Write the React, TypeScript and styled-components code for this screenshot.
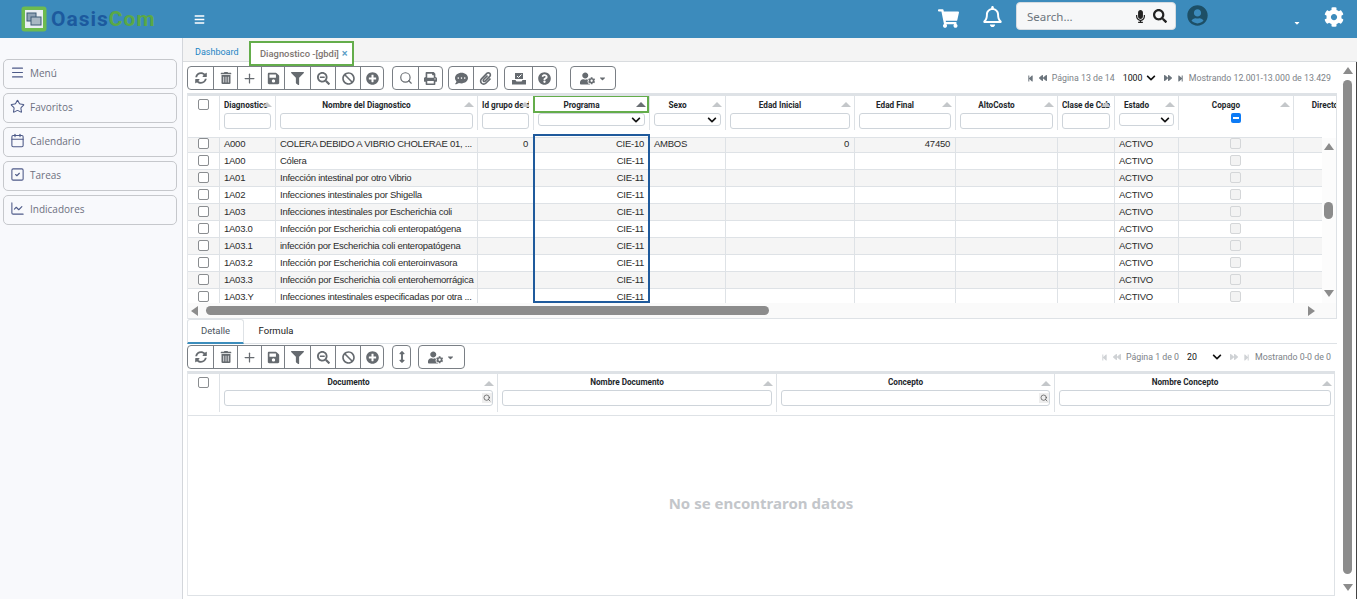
import React from "react";
import styled, { createGlobalStyle } from "styled-components";
import {
  FaSyncAlt, FaTrashAlt, FaSave, FaFilter, FaSearchMinus, FaBan, FaPlusCircle, FaPrint,
  FaCommentDots, FaPaperclip, FaQuestionCircle, FaUserCog, FaShoppingCart, FaRegBell,
  FaMicrophone, FaSearch, FaUserCircle, FaCog, FaBars, FaChevronDown, FaStepBackward,
  FaBackward, FaForward, FaStepForward, FaArrowsAltV, FaCaretDown,
} from "react-icons/fa";
import { Menu, Star, Calendar, SquareCheck, ChartLine, Plus, Search } from "lucide-react";

const GlobalStyle = createGlobalStyle`
  html, body { margin: 0; padding: 0; height: 100%; overflow: hidden; background: #fff; }
  * { box-sizing: border-box; }
`;

const MAIN_COLS = "32px 56px 202px 56px 116px 76px 129px 101px 102px 57px 64px 115px 86px";
const DETAIL_COLS = "32px 278px 279px 278px 281px";

const Shell = styled.div`
  width: 1357px;
  height: 599px;
  display: flex;
  flex-direction: column;
  overflow: hidden;
  font-family: "Liberation Sans", Arial, sans-serif;
`;

const TopBar = styled.header`
  height: 38px;
  flex: none;
  display: flex;
  align-items: center;
  background: #3c8bbc;
  color: #fff;
`;

const Logo = styled.div`
  display: flex;
  align-items: center;
  gap: 4px;
  margin-left: 21px;
  width: 173px;
`;

const LogoText = styled.span`
  font-family: Roboto, sans-serif;
  font-weight: 700;
  font-size: 21px;
  letter-spacing: 1px;
  color: #1c5a9e;
  b { color: #5aa846; font-weight: 700; }
`;

const HeaderIcon = styled.span<{ $left: number; $top?: number }>`
  display: inline-flex;
  margin-left: ${(p) => p.$left}px;
  margin-top: ${(p) => p.$top ?? 0}px;
`;

const SearchBox = styled.div`
  width: 160px;
  height: 28px;
  margin: 0 0 6px 13px;
  padding: 0 8px 0 10px;
  display: flex;
  align-items: center;
  background: #f6f7f8;
  border-radius: 4px;
  border: 1px solid #d5dbe0;
  color: #6c757d;
  font-family: "Noto Sans", sans-serif;
  font-size: 11.5px;
  span { flex: 1; }
  svg { color: #222; }
`;

const Body = styled.div`
  flex: 1;
  display: flex;
  min-height: 0;
`;

const Sidebar = styled.aside`
  width: 183px;
  flex: none;
  padding: 21px 5px 0 3px;
  display: flex;
  flex-direction: column;
  gap: 4px;
  background: #f8f9fc;
  border-right: 1px solid #d3d6db;
`;

const NavItem = styled.div`
  height: 30px;
  display: flex;
  align-items: center;
  gap: 5px;
  padding: 0 0 3px 6px;
  border: 1px solid #c6c8cc;
  border-radius: 5px;
  color: #6d7080;
  font-family: "Open Sans", sans-serif;
  font-size: 10px;
  svg { color: #4d5a88; flex: none; }
`;

const Main = styled.main`
  flex: 1;
  min-width: 0;
  display: flex;
  flex-direction: column;
  position: relative;
`;

const TabStrip = styled.nav`
  height: 24px;
  flex: none;
  display: flex;
  align-items: flex-start;
  padding-left: 12px;
  background: #f4f4f4;
  border-bottom: 1px solid #d9dcdf;
  font-family: Roboto, sans-serif;
  font-size: 9px;
`;

const DashTab = styled.span`
  margin-top: 9px;
  color: #1d84c4;
  width: 54px;
`;

const ActiveTab = styled.span`
  width: 105px;
  height: 25px;
  margin-top: 3px;
  display: flex;
  align-items: center;
  gap: 3px;
  padding: 0 0 0 9px;
  white-space: nowrap;
  background: #fff;
  border: 2px solid #64ad4b;
  color: #7d7470;
  font-weight: 500;
  font-size: 9.4px;
  position: relative;
  z-index: 2;
  i { color: #5a9cc4; font-style: normal; font-size: 11px; }
`;

const Content = styled.div`
  flex: 1;
  min-height: 0;
  padding: 4px 20px 0 4px;
  display: flex;
  flex-direction: column;
  background: #fff;
`;

const ToolRow = styled.div<{ $mt?: number }>`
  height: 24px;
  flex: none;
  display: flex;
  align-items: center;
  margin-top: ${(p) => p.$mt ?? 0}px;
  padding-right: 6px;
`;

const ToolGroup = styled.div<{ $ml?: number }>`
  display: flex;
  height: 24px;
  margin-left: ${(p) => p.$ml ?? 0}px;
  border: 1px solid #7a7f85;
  border-radius: 4px;
  overflow: hidden;
`;

const ToolButton = styled.span<{ $w?: number }>`
  width: ${(p) => p.$w ?? 25}px;
  display: flex;
  align-items: center;
  justify-content: center;
  gap: 3px;
  color: #666b70;
  & + & { border-left: 1px solid #7a7f85; }
`;

const Pager = styled.div<{ $dim?: boolean }>`
  margin-left: auto;
  display: flex;
  align-items: center;
  gap: 5px;
  font-family: Roboto, sans-serif;
  font-size: 8.8px;
  color: #7c8287;
  svg { color: ${(p) => (p.$dim ? "#cfd2d5" : "#6c757d")}; }
`;

const PageSize = styled.span<{ $w: number }>`
  width: ${(p) => p.$w}px;
  display: flex;
  align-items: center;
  justify-content: space-between;
  color: #111;
  margin: 0 3px;
  svg { color: #111; }
`;

const GridFrame = styled.section<{ $mt: number; $w: number }>`
  position: relative;
  flex: none;
  margin-top: ${(p) => p.$mt}px;
  width: ${(p) => p.$w}px;
  border-top: 3px solid #dee2e6;
  border-left: 1px solid #e6e8eb;
  border-right: 1px solid #dee2e6;
  overflow: hidden;
`;

const HeadRow = styled.div<{ $cols: string; $pb: number }>`
  display: grid;
  grid-template-columns: ${(p) => p.$cols};
  padding-bottom: ${(p) => p.$pb}px;
`;

const HeadCell = styled.div<{ $h: number; $pt?: number }>`
  position: relative;
  height: ${(p) => p.$h}px;
  padding: ${(p) => p.$pt ?? 0}px 4px 0;
  border-right: 1px solid #dee2e6;
  overflow: hidden;
`;

const HeadLabel = styled.div<{ $h?: number; $lh?: number; $tight?: boolean }>`
  height: ${(p) => p.$h ?? 17}px;
  line-height: ${(p) => p.$lh ?? 18}px;
  padding-right: ${(p) => (p.$tight ? 0 : 20)}px;
  text-align: ${(p) => (p.$tight ? "left" : "center")};
  white-space: nowrap;
  overflow: hidden;
  font-family: Roboto, sans-serif;
  font-weight: 700;
  font-size: 8.2px;
  color: #23272b;
`;

const SortMark = styled.i<{ $on?: boolean; $top?: number }>`
  position: absolute;
  right: 3px;
  top: ${(p) => p.$top ?? 6}px;
  border-left: 5px solid transparent;
  border-right: 5px solid transparent;
  border-bottom: 5px solid ${(p) => (p.$on ? "#6a6f74" : "#c4c7ca")};
`;

const FilterInput = styled.input`
  display: block;
  width: 100%;
  height: 16px;
  padding: 0 3px;
  border: 1px solid #ced4da;
  border-radius: 3px;
  background: #fff;
  outline: none;
`;

const FilterSearch = styled.div`
  height: 16px;
  display: flex;
  justify-content: flex-end;
  align-items: center;
  border: 1px solid #ced4da;
  border-radius: 3px;
  svg { background: #eee; color: #444; padding: 1px; }
`;

const FilterSelect = styled.div`
  height: 13px;
  display: flex;
  justify-content: flex-end;
  align-items: center;
  padding-right: 3px;
  border: 1px solid #ced4da;
  border-radius: 3px;
  color: #111;
`;

const MixedBox = styled.span`
  display: flex;
  align-items: center;
  justify-content: center;
  width: 10px;
  height: 10px;
  margin-left: 48px;
  background: #0d7bf5;
  border-radius: 2px;
  &::after { content: ""; width: 6px; height: 2px; background: #fff; }
`;

const Viewport = styled.div`
  position: relative;
  height: 166px;
  width: 1134px;
  overflow: hidden;
  border-top: 1px solid #dee2e6;
`;

const DataRow = styled.div<{ $odd: boolean }>`
  display: grid;
  grid-template-columns: ${MAIN_COLS};
  height: 17px;
  border-bottom: 1px solid #dee2e6;
  background: ${(p) => (p.$odd ? "#f5f5f5" : "#fff")};
  &:first-child { height: 15px; }
`;

const Cell = styled.div<{ $right?: boolean; $center?: boolean }>`
  padding: 0 5px 2px 4px;
  border-right: 1px solid #dee2e6;
  font-size: 9.5px;
  letter-spacing: -0.25px;
  color: #2b2b2b;
  line-height: 11px;
  white-space: nowrap;
  overflow: hidden;
  display: flex;
  align-items: center;
  justify-content: ${(p) => (p.$center ? "center" : p.$right ? "flex-end" : "flex-start")};
  ${DataRow}:first-child & { padding-bottom: 4px; }
`;

const CheckCell = styled(Cell)`
  padding-left: 10px;
`;

const CopagoCell = styled(Cell)`
  padding-left: 0;
  padding-right: 2px;
`;

const RowCheck = styled.span<{ $off?: boolean }>`
  width: 11px;
  height: 11px;
  border: 1px solid ${(p) => (p.$off ? "#d4d6d8" : "#8a8d90")};
  border-radius: 2px;
  background: ${(p) => (p.$off ? "#f3f3f3" : "#fff")};
  flex: none;
`;

const HeadCheck = styled(RowCheck)`
  display: block;
  margin: 3px 0 0 6px;
`;

const ColumnMark = styled.div`
  position: absolute;
  left: 345px;
  top: 38px;
  width: 117px;
  height: 169px;
  border: 2px solid #1f5a9c;
  pointer-events: none;
`;

const HeadMark = styled.div`
  position: absolute;
  left: 345px;
  top: -1px;
  width: 116px;
  height: 18px;
  border: 2px solid #64ad4b;
  pointer-events: none;
`;

const HBar = styled.div`
  position: relative;
  height: 16px;
  background: #fafafa;
  border-bottom: 1px solid #dee2e6;
`;

const VBar = styled.div`
  position: absolute;
  right: 0;
  top: 42px;
  width: 15px;
  height: 166px;
  background: #fcfcfc;
`;

const Thumb = styled.span<{ $l: number; $t: number; $w: number; $h: number }>`
  position: absolute;
  left: ${(p) => p.$l}px;
  top: ${(p) => p.$t}px;
  width: ${(p) => p.$w}px;
  height: ${(p) => p.$h}px;
  border-radius: 5px;
  background: #8c8c8c;
`;

const Arrow = styled.i<{ $dir: "up" | "down" | "left" | "right"; $l: number; $t: number }>`
  position: absolute;
  left: ${(p) => p.$l}px;
  top: ${(p) => p.$t}px;
  width: 0;
  height: 0;
  border-style: solid;
  border-color: transparent;
  ${(p) =>
    p.$dir === "up"
      ? "border-width: 0 5px 7px; border-bottom-color: #8c8c8c;"
      : p.$dir === "down"
      ? "border-width: 7px 5px 0; border-top-color: #8c8c8c;"
      : p.$dir === "left"
      ? "border-width: 5px 7px 5px 0; border-right-color: #8c8c8c;"
      : "border-width: 5px 0 5px 7px; border-left-color: #8c8c8c;"}
`;

const SubTabs = styled.div`
  height: 25px;
  flex: none;
  width: 1150px;
  display: flex;
  border-bottom: 1px solid #dee2e6;
  font-family: Roboto, sans-serif;
  font-size: 9.5px;
  color: #222;
`;

const SubTab = styled.span<{ $active?: boolean }>`
  width: ${(p) => (p.$active ? 57 : 64)}px;
  height: 25px;
  padding-bottom: 2px;
  display: flex;
  align-items: center;
  justify-content: center;
  color: ${(p) => (p.$active ? "#4a5560" : "#222")};
  border: 1px solid ${(p) => (p.$active ? "#dee2e6" : "transparent")};
  border-bottom: 2px solid ${(p) => (p.$active ? "#3c8dbc" : "transparent")};
  border-radius: 3px 3px 0 0;
`;

const EmptyPane = styled.div`
  height: 181px;
  padding-bottom: 5px;
  border-top: 1px solid #dee2e6;
  border-bottom: 1px solid #dee2e6;
  display: flex;
  align-items: center;
  justify-content: center;
  font-family: "Noto Sans", sans-serif;
  font-weight: 700;
  font-size: 15px;
  color: #c3c6ca;
`;

const PageScroll = styled.div`
  position: absolute;
  right: 0;
  top: 24px;
  bottom: 0;
  width: 14px;
  background: #fff;
  border-right: 1px solid #444;
`;

type Row = [string, string, string?, string?, string?, string?, string?];

const rows: Row[] = [
  ["A000", "COLERA DEBIDO A VIBRIO CHOLERAE 01, ...", "0", "CIE-10", "AMBOS", "0", "47450"],
  ["1A00", "Cólera"],
  ["1A01", "Infección intestinal por otro Vibrio"],
  ["1A02", "Infecciones intestinales por Shigella"],
  ["1A03", "Infecciones intestinales por Escherichia coli"],
  ["1A03.0", "Infección por Escherichia coli enteropatógena"],
  ["1A03.1", "infección por Escherichia coli enteropatógena"],
  ["1A03.2", "Infección por Escherichia coli enteroinvasora"],
  ["1A03.3", "Infección por Escherichia coli enterohemorrágica"],
  ["1A03.Y", "Infecciones intestinales especificadas por otra ..."],
];

const mainHead: { label: string; kind: "input" | "select" | "mixed"; tight?: boolean }[] = [
  { label: "Diagnostico", kind: "input", tight: true },
  { label: "Nombre del Diagnostico", kind: "input" },
  { label: "Id grupo de diagnostico", kind: "input", tight: true },
  { label: "Programa", kind: "select" },
  { label: "Sexo", kind: "select" },
  { label: "Edad Inicial", kind: "input" },
  { label: "Edad Final", kind: "input" },
  { label: "AltoCosto", kind: "input" },
  { label: "Clase de Cubrimiento", kind: "input", tight: true },
  { label: "Estado", kind: "select" },
  { label: "Copago", kind: "mixed" },
  { label: "Director", kind: "input" },
];

const LogoMark = () => (
  <svg width="26" height="26" viewBox="0 0 26 26">
    <rect x="0.5" y="0.5" width="25" height="25" rx="3" fill="#6dbb4f" />
    <rect x="4" y="4" width="18" height="18" fill="#e9eef2" />
    <rect x="6" y="7" width="9" height="8" fill="#8fa3b5" stroke="#3d5a75" />
    <rect x="10" y="11" width="10" height="8" fill="#a9b8c4" stroke="#3d5a75" />
  </svg>
);

const TrayIcon = () => (
  <svg width="14" height="13" viewBox="0 0 14 13" fill="#666b70">
    <path d="M3 1h8v6H3z" />
    <path d="M5 4l1.5 1.5L9.5 2.5" stroke="#fff" strokeWidth="1" fill="none" />
    <path d="M0 8h3.5l1 1.5h5l1-1.5H14v4.5H0z" />
  </svg>
);

const EditTools = () => (
  <ToolGroup>
    <ToolButton $w={25}><FaSyncAlt size={12} /></ToolButton>
    <ToolButton $w={24}><FaTrashAlt size={12} /></ToolButton>
    <ToolButton $w={24}><Plus size={15} /></ToolButton>
    <ToolButton $w={23}><FaSave size={13} /></ToolButton>
    <ToolButton $w={26}><FaFilter size={13} /></ToolButton>
    <ToolButton $w={25}><FaSearchMinus size={13} /></ToolButton>
    <ToolButton $w={25}><FaBan size={13} /></ToolButton>
    <ToolButton $w={23}><FaPlusCircle size={13} /></ToolButton>
  </ToolGroup>
);

const UserMenu = ({ ml, w }: { ml: number; w: number }) => (
  <ToolGroup $ml={ml}>
    <ToolButton $w={w}>
      <FaUserCog size={15} />
      <FaCaretDown size={9} />
    </ToolButton>
  </ToolGroup>
);

const PagerArrows = ({ side }: { side: "prev" | "next" }) =>
  side === "prev" ? (
    <>
      <FaStepBackward size={7} />
      <FaBackward size={8} />
    </>
  ) : (
    <>
      <FaForward size={8} />
      <FaStepForward size={7} />
    </>
  );

const MainGrid = () => (
  <GridFrame $mt={3} $w={1150}>
    <HeadRow $cols={MAIN_COLS} $pb={7}>
      <HeadCell $h={34}><HeadCheck /></HeadCell>
      {mainHead.map((h) => (
        <HeadCell key={h.label} $h={34}>
          <HeadLabel $tight={h.tight}>{h.label}</HeadLabel>
          {h.label !== "Director" && <SortMark $on={h.label === "Programa"} />}
          {h.kind === "input" && h.label !== "Director" && <FilterInput readOnly />}
          {h.kind === "select" && (
            <FilterSelect><FaChevronDown size={10} /></FilterSelect>
          )}
          {h.kind === "mixed" && <MixedBox />}
        </HeadCell>
      ))}
    </HeadRow>
    <HeadMark />
    <VBar>
      <Arrow $dir="up" $l={3} $t={5} />
      <Thumb $l={3} $t={64} $w={9} $h={17} />
      <Arrow $dir="down" $l={3} $t={152} />
    </VBar>
    <Viewport>
      {rows.map((r, i) => (
        <DataRow key={r[0]} $odd={i % 2 === 0}>
          <CheckCell><RowCheck /></CheckCell>
          <Cell>{r[0]}</Cell>
          <Cell>{r[1]}</Cell>
          <Cell $right>{r[2]}</Cell>
          <Cell $right>{r[3] ?? "CIE-11"}</Cell>
          <Cell>{r[4]}</Cell>
          <Cell $right>{r[5]}</Cell>
          <Cell $right>{r[6]}</Cell>
          <Cell />
          <Cell />
          <Cell>ACTIVO</Cell>
          <CopagoCell $center><RowCheck $off /></CopagoCell>
          <Cell />
        </DataRow>
      ))}
    </Viewport>
    <ColumnMark />
    <HBar>
      <Arrow $dir="left" $l={3} $t={3} />
      <Thumb $l={18} $t={3} $w={563} $h={9} />
      <Arrow $dir="right" $l={1120} $t={3} />
    </HBar>
  </GridFrame>
);

const DetailGrid = () => (
  <GridFrame $mt={2} $w={1148}>
    <HeadRow $cols={DETAIL_COLS} $pb={3}>
      <HeadCell $h={38}><HeadCheck /></HeadCell>
      {["Documento", "Nombre Documento", "Concepto", "Nombre Concepto"].map((label, i) => (
        <HeadCell key={label} $h={38} $pt={1}>
          <HeadLabel $h={15} $lh={15}>{label}</HeadLabel>
          <SortMark $top={7} />
          {i % 2 === 0 ? (
            <FilterSearch><Search size={10} strokeWidth={2} /></FilterSearch>
          ) : (
            <FilterInput readOnly />
          )}
        </HeadCell>
      ))}
    </HeadRow>
    <EmptyPane>No se encontraron datos</EmptyPane>
  </GridFrame>
);

export default function App() {
  return (
    <Shell>
      <GlobalStyle />
      <TopBar>
        <Logo>
          <LogoMark />
          <LogoText>Oasis<b>Com</b></LogoText>
        </Logo>
        <FaBars size={11} />
        <HeaderIcon $left={733} $top={-2}><FaShoppingCart size={21} /></HeaderIcon>
        <HeaderIcon $left={23} $top={-5}><FaRegBell size={21} /></HeaderIcon>
        <SearchBox>
          <span>Search...</span>
          <FaMicrophone size={13} style={{ marginRight: 6 }} />
          <FaSearch size={14} />
        </SearchBox>
        <HeaderIcon $left={11} $top={-8}><FaUserCircle size={21} color="#1d4f66" /></HeaderIcon>
        <HeaderIcon $left={85} $top={8}><FaCaretDown size={8} /></HeaderIcon>
        <HeaderIcon $left={23} $top={-4}><FaCog size={20} /></HeaderIcon>
      </TopBar>
      <Body>
        <Sidebar>
          <NavItem><Menu size={15} strokeWidth={1.7} />Menú</NavItem>
          <NavItem><Star size={15} strokeWidth={1.7} />Favoritos</NavItem>
          <NavItem><Calendar size={15} strokeWidth={1.7} />Calendario</NavItem>
          <NavItem><SquareCheck size={15} strokeWidth={1.7} />Tareas</NavItem>
          <NavItem><ChartLine size={15} strokeWidth={1.7} />Indicadores</NavItem>
        </Sidebar>
        <Main>
          <TabStrip>
            <DashTab>Dashboard</DashTab>
            <ActiveTab>Diagnostico -[gbdi] <i>×</i></ActiveTab>
          </TabStrip>
          <Content>
            <ToolRow>
              <EditTools />
              <ToolGroup $ml={8}>
                <ToolButton $w={25}><Search size={14} /></ToolButton>
                <ToolButton $w={24}><FaPrint size={13} /></ToolButton>
              </ToolGroup>
              <ToolGroup $ml={5}>
                <ToolButton $w={24}><FaCommentDots size={13} /></ToolButton>
                <ToolButton $w={24}><FaPaperclip size={13} /></ToolButton>
              </ToolGroup>
              <ToolGroup $ml={6}>
                <ToolButton $w={27}><TrayIcon /></ToolButton>
                <ToolButton $w={24}><FaQuestionCircle size={13} /></ToolButton>
              </ToolGroup>
              <UserMenu ml={13} w={44} />
              <Pager>
                <PagerArrows side="prev" />
                <span>Página 13 de 14</span>
                <PageSize $w={33}>1000<FaChevronDown size={10} /></PageSize>
                <PagerArrows side="next" />
                <span>Mostrando 12.001-13.000 de 13.429</span>
              </Pager>
            </ToolRow>
            <MainGrid />
            <SubTabs>
              <SubTab $active>Detalle</SubTab>
              <SubTab>Formula</SubTab>
            </SubTabs>
            <ToolRow $mt={1}>
              <EditTools />
              <ToolGroup $ml={8}>
                <ToolButton $w={17}><FaArrowsAltV size={12} /></ToolButton>
              </ToolGroup>
              <UserMenu ml={7} w={45} />
              <Pager $dim>
                <PagerArrows side="prev" />
                <span>Página 1 de 0</span>
                <PageSize $w={35}>20<FaChevronDown size={10} /></PageSize>
                <PagerArrows side="next" />
                <span>Mostrando 0-0 de 0</span>
              </Pager>
            </ToolRow>
            <DetailGrid />
          </Content>
          <PageScroll>
            <Arrow $dir="up" $l={0} $t={5} />
            <Thumb $l={0} $t={18} $w={9} $h={494} />
            <Arrow $dir="down" $l={0} $t={522} />
          </PageScroll>
        </Main>
      </Body>
    </Shell>
  );
}
